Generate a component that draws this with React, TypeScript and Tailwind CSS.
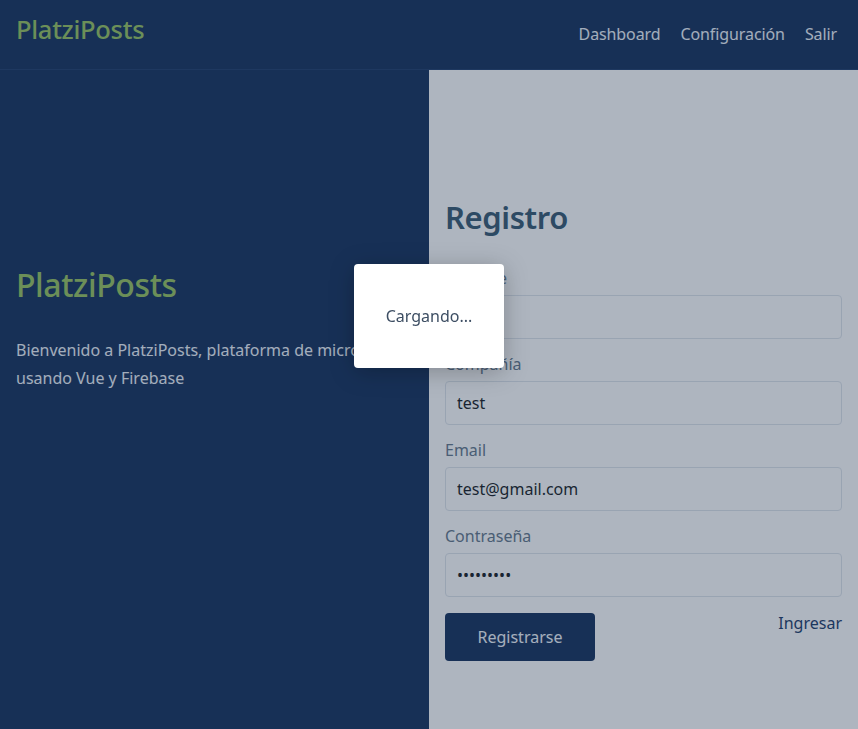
const NAV_LINKS = ["Dashboard", "Configuración", "Salir"];

type Field = {
  label: string;
  value: string;
  type: string;
};

const FIELDS: Field[] = [
  { label: "Nombre", value: "test", type: "text" },
  { label: "Compañía", value: "test", type: "text" },
  { label: "Email", value: "test@gmail.com", type: "email" },
  { label: "Contraseña", value: "123456789", type: "password" },
];

function Header() {
  return (
    <header className="flex h-[70px] items-start justify-between border-b border-[#22406e] bg-[#18345f] px-4">
      <a className="pt-[12px] text-[25.5px] font-medium leading-[34px] tracking-[-0.3px] text-[#9ac562]">
        PlatziPosts
      </a>
      <nav className="flex gap-5 pr-[5px] pt-[22px] text-[16px] leading-6 tracking-[-0.1px] text-[#eef3fa]">
        {NAV_LINKS.map((link) => (
          <a key={link}>{link}</a>
        ))}
      </nav>
    </header>
  );
}

function Hero() {
  return (
    <section className="w-[429px] shrink-0 bg-[#18345f] px-4 pt-[195px]">
      <h2 className="text-[32px] font-medium leading-10 tracking-[-0.4px] text-[#9ac562]">PlatziPosts</h2>
      <p className="mt-[31px] text-[16px] leading-7 text-[#eef3fa]">
        Bienvenido a PlatziPosts, plataforma de microposts usando Vue y Firebase
      </p>
    </section>
  );
}

function RegisterForm() {
  return (
    <section className="flex-1 bg-white px-4 pt-[127px]">
      <h1 className="text-[31px] font-semibold leading-10 tracking-[-0.4px] text-[#3a5b74]">Registro</h1>
      <form className="mt-[29px]">
        {FIELDS.map((field) => (
          <div key={field.label} className="mb-[13px]">
            <label className="block text-[16px] leading-6 text-[#66798c]">{field.label}</label>
            <input
              type={field.type}
              defaultValue={field.value}
              readOnly
              className="mt-[5px] block h-11 w-full rounded border border-[#dfe5ec] bg-white px-[11px] text-[16px] text-[#1b1f27] outline-none"
            />
          </div>
        ))}
        <div className="mt-4 flex items-start justify-between">
          <button
            type="button"
            className="h-12 w-[150px] rounded bg-[#18345f] text-[16px] text-[#f2f6fb]"
          >
            Registrarse
          </button>
          <a className="text-[16px] leading-5 text-[#1e3e6c]">Ingresar</a>
        </div>
      </form>
    </section>
  );
}

function LoadingModal() {
  return (
    <div className="fixed inset-0 z-10 bg-[#182c48]/35">
      <div className="absolute left-[354px] top-[264px] flex h-[104px] w-[150px] items-center justify-center rounded bg-white text-[16px] text-[#3d4e63] shadow-[0_4px_24px_rgba(0,0,0,0.25)]">
        Cargando...
      </div>
    </div>
  );
}

export default function App() {
  return (
    <div className="flex h-[729px] flex-col overflow-hidden font-['Noto_Sans',sans-serif]">
      <Header />
      <main className="flex flex-1">
        <Hero />
        <RegisterForm />
      </main>
      <LoadingModal />
    </div>
  );
}
